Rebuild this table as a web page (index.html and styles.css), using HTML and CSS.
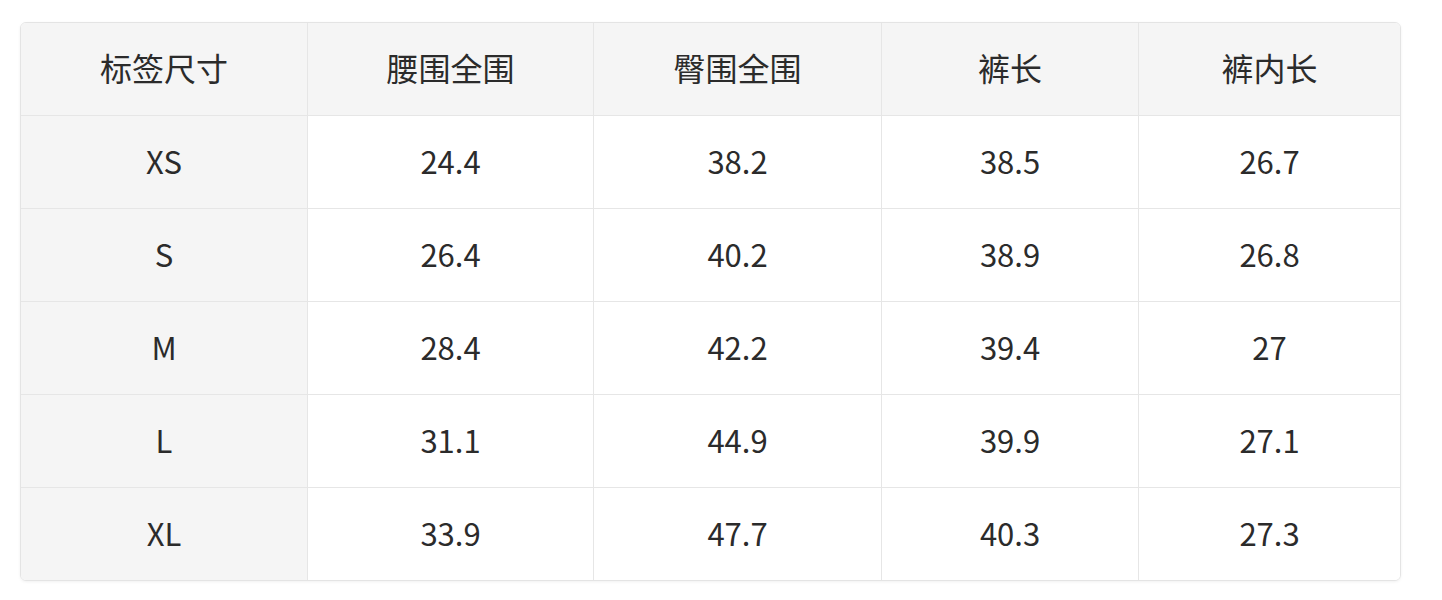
FILE: index.html
```html
<!DOCTYPE html>
<html lang="zh-CN">
<head>
<meta charset="utf-8">
<title>尺码表</title>
<link rel="stylesheet" href="styles.css">
</head>
<body>
<div class="size-card">
  <table class="size-table">
    <colgroup>
      <col class="c1"><col class="c2"><col class="c3"><col class="c4"><col class="c5">
    </colgroup>
    <thead>
      <tr><th>标签尺寸</th><th>腰围全围</th><th>臀围全围</th><th>裤长</th><th>裤内长</th></tr>
    </thead>
    <tbody>
      <tr><th>XS</th><td>24.4</td><td>38.2</td><td>38.5</td><td>26.7</td></tr>
      <tr><th>S</th><td>26.4</td><td>40.2</td><td>38.9</td><td>26.8</td></tr>
      <tr><th>M</th><td>28.4</td><td>42.2</td><td>39.4</td><td>27</td></tr>
      <tr><th>L</th><td>31.1</td><td>44.9</td><td>39.9</td><td>27.1</td></tr>
      <tr><th>XL</th><td>33.9</td><td>47.7</td><td>40.3</td><td>27.3</td></tr>
    </tbody>
  </table>
</div>
</body>
</html>
```
FILE: styles.css
```css
html, body {
  margin: 0;
  background: #ffffff;
}
body {
  padding: 22px 20px;
  font-family: "Noto Sans CJK SC", "Noto Sans", sans-serif;
  color: #2b2b2b;
}
.size-card {
  width: 1379px;
  border: 1px solid #e4e4e4;
  border-radius: 6px;
  overflow: hidden;
  box-shadow: 0 1px 3px rgba(0, 0, 0, 0.06);
}
.size-table {
  width: 100%;
  border-collapse: separate;
  border-spacing: 0;
  table-layout: fixed;
}
.c1 { width: 287px; }
.c2 { width: 286px; }
.c3 { width: 288px; }
.c4 { width: 257px; }
.c5 { width: 261px; }
.size-table th,
.size-table td {
  height: 88px;
  padding: 0 0 4px;
  text-align: center;
  vertical-align: middle;
  font-size: 31px;
  font-weight: 400;
  border-right: 1px solid #e6e6e6;
  border-bottom: 1px solid #e6e6e6;
  line-height: 1;
}
.size-table thead th {
  font-size: 32px;
}
.size-table tr > :last-child {
  border-right: none;
}
.size-table tbody tr:last-child > * {
  border-bottom: none;
}
.size-table thead th,
.size-table tbody th {
  background: #f5f5f5;
}
.size-table td {
  background: #ffffff;
}
```
